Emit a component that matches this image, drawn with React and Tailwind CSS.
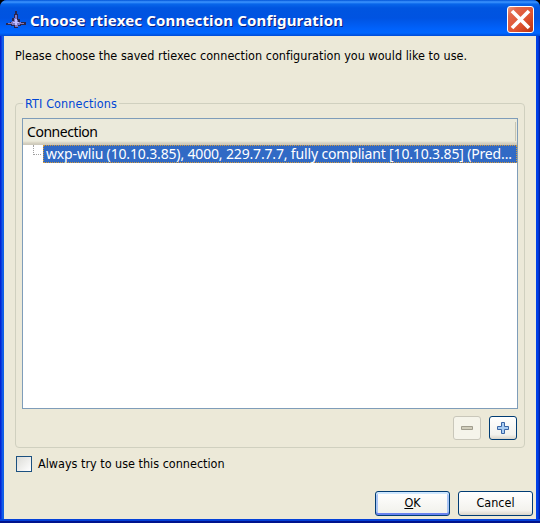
const ui = "font-['DejaVu_Sans_Condensed','DejaVu_Sans',sans-serif] [font-stretch:condensed]";

function AppIcon() {
  return (
    <svg className="h-5 w-5 shrink-0" viewBox="0 0 20 20">
      <path d="M9 1h2v3h1v5h2v3h6v3h-5v1h-3v2H8v-2H5v-1H0v-2h4v-1h2V8h2V4h1z" fill="#29264f" />
      <path d="M9 5h2v5h1v2h3v1h3v1h-4v1h-2v2H9v-2H6v-1H3v-1h3v-2h2V8h1z" fill="#7f78c4" />
      <path d="M9 9h2v3h2v1h-2v2H9v-2H7v-1h2z" fill="#c1bcff" />
      <path d="M2 13h2v1H2zM16 13h2v1h-2zM9 16h1v1H9zM5 12h1v2H5z" fill="#8f78a8" />
    </svg>
  );
}

function TitleBar() {
  return (
    <header className="flex h-9 shrink-0 items-center bg-[linear-gradient(#0053d6_0,#3e96ff_2px,#0866ea_4px,#0055e0_8px,#0053e1_18px,#0062fc_29px,#0067ff_33px,#004bd5_36px)] pl-1.5 pr-[6px] pt-[3px]">
      <AppIcon />
      <h1 className="ml-1 grow whitespace-nowrap font-['Noto_Sans',sans-serif] text-[15px] font-bold leading-5 tracking-[0.16px] text-white [text-shadow:1px_1px_#0b1d80]">
        Choose rtiexec Connection Configuration
      </h1>
      <button className="h-[27px] w-[27px] shrink-0 rounded-[3px] border border-white bg-[linear-gradient(135deg,#ed9b80_0,#e2674b_20%,#df5330_60%,#b93210_100%)]">
        <svg className="block h-[25px] w-[25px]" viewBox="0 0 25 25">
          <path d="M4 4l17 17M21 4L4 21" stroke="#fff" strokeWidth="3.7" />
        </svg>
      </button>
    </header>
  );
}

function ConnectionTable() {
  return (
    <div className="flex h-[291px] flex-col border border-[#7f9db9] bg-white font-['Noto_Sans',sans-serif] text-[14px]">
      <div className="flex h-[26px] shrink-0 bg-[linear-gradient(#ebeadb_22px,#e2decd_23px,#d6d2c2_24px,#cbc7b8_26px)]">
        <span className="grow pl-1 leading-[26px] tracking-[-0.45px]">Connection</span>
        <span className="mr-px mt-[3px] h-[19px] w-px bg-[#c7c5b2]" />
      </div>
      <div className="flex h-[18px] shrink-0">
        <div className="ml-2.5 mr-[2px] h-[10px] w-[8px] border-b border-l border-dotted border-[#a0a0a0]" />
        <div className="h-[18px] grow whitespace-nowrap border border-dotted border-[#d39a3b] bg-[#316ac5] pl-[2px] leading-[16px] tracking-[-0.16px] text-white">
          wxp-wliu (10.10.3.85), 4000, 229.7.7.7, fully compliant [10.10.3.85] (Pred...
        </div>
      </div>
    </div>
  );
}

function Connections() {
  return (
    <fieldset className="mt-[32px] h-[352px] min-w-0 rounded-[4px] border border-[#d0d0bf] px-[6px]">
      <legend className={`${ui} ml-px h-[15px] px-0.5 text-[12.5px] leading-[15px] tracking-[0.12px] text-[#0046d5]`}>RTI Connections</legend>
      <div className="mt-[7px]">
        <ConnectionTable />
      </div>
      <div className="mt-[7px] flex justify-end gap-2 pr-px">
        <button disabled className="flex h-6 w-7 items-center justify-center rounded-[3px] border border-[#c9c7ba] bg-[#f5f4ea]">
          <svg width="12" height="4" viewBox="0 0 12 4">
            <path d="M.5.5h11v3H.5z" fill="#d0cdbb" stroke="#a09d8e" />
          </svg>
        </button>
        <button className="flex h-6 w-7 items-center justify-center rounded-[3px] border border-[#003c74] bg-[linear-gradient(#fff,#f3f2ed_80%,#dad5ca)]">
          <svg width="12" height="12" viewBox="0 0 12 12">
            <path d="M4.5.5h3v4h4v3h-4v4h-3v-4h-4v-3h4z" fill="#a9cdf2" stroke="#3a65a5" />
          </svg>
        </button>
      </div>
    </fieldset>
  );
}

export default function App() {
  return (
    <div className="h-[523px] w-[540px] bg-black">
      <div className={`${ui} flex h-full w-full flex-col overflow-hidden rounded-t-[7px] bg-[#0046e0] text-[12.5px] text-black`}>
        <TitleBar />
        <div className="flex grow bg-[#0831d9] bg-[linear-gradient(90deg,#0019cf_0,#0831d9_1px,#166aee_3px,#0855dd_4px,#0855dd_536px,#0040e8_536px,#0040e8_538px,#001590_540px)] pb-1 pl-1 pr-1 shadow-[inset_0_-2px_#00138c,inset_0_-4px_#0441d8]">
          <main className="flex grow flex-col bg-[#ece9d8] pl-[11px] pr-[11px] pt-[12px]">
            <p className="h-4 whitespace-nowrap leading-4 tracking-[0.02px]">Please choose the saved rtiexec connection configuration you would like to use.</p>
            <Connections />
            <label className="ml-px mt-2 flex h-4 items-center">
              <span className="h-4 w-4 border border-[#1c5180] bg-[linear-gradient(135deg,#dcdcd7,#fff)]" />
              <span className="ml-1.5 leading-4">Always try to use this connection</span>
            </label>
            <div className="-mr-2 mt-[19px] flex justify-end gap-2">
              <button className="h-[25px] w-[75px] rounded-[3px] border border-[#003c74] bg-[linear-gradient(#fff,#f0f0ea)] shadow-[inset_0_2px_#cee7ff,inset_0_-2px_#6982ee,inset_2px_0_#a9c5f5,inset_-2px_0_#a9c5f5]">
                <span className="underline">O</span>K
              </button>
              <button className="h-[25px] w-[75px] rounded-[3px] border border-[#003c74] bg-[linear-gradient(#fff,#f3f2ed_80%,#dad5ca)]">Cancel</button>
            </div>
          </main>
        </div>
      </div>
    </div>
  );
}
